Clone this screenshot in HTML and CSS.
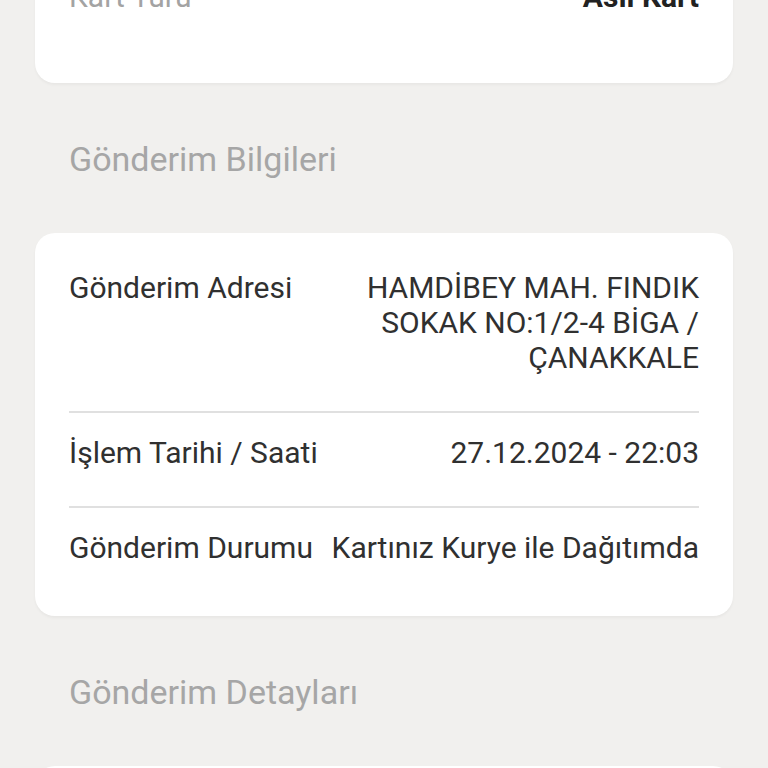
FILE: index.html
```html
<!DOCTYPE html>
<html lang="tr">
<head>
<meta charset="utf-8">
<title>Gönderim Bilgileri</title>
<link rel="stylesheet" href="styles.css">
</head>
<body>
<main class="page">
  <section class="card card-top">
    <div class="row row-top">
      <span class="label label-muted">Kart Türü</span>
      <span class="value value-strong">Asıl Kart</span>
    </div>
  </section>

  <h2 class="section-title">Gönderim Bilgileri</h2>

  <section class="card">
    <div class="row">
      <span class="label">Gönderim Adresi</span>
      <span class="value">HAMDİBEY MAH. FINDIK SOKAK NO:1/2-4 BİGA / ÇANAKKALE</span>
    </div>
    <div class="row">
      <span class="label">İşlem Tarihi / Saati</span>
      <span class="value">27.12.2024 - 22:03</span>
    </div>
    <div class="row">
      <span class="label">Gönderim Durumu</span>
      <span class="value">Kartınız Kurye ile Dağıtımda</span>
    </div>
  </section>

  <h2 class="section-title">Gönderim Detayları</h2>

  <section class="card card-bottom"></section>
</main>
</body>
</html>
```

FILE: styles.css
```css
html, body {
  margin: 0;
  padding: 0;
  background: #f1f0ee;
}

body {
  font-family: Roboto, "Noto Sans", sans-serif;
  color: #303030;
  overflow: hidden;
  height: 768px;
}

.page {
  padding: 0 35px;
  margin-top: -21px;
}

.card {
  background: #ffffff;
  border-radius: 20px;
  padding: 15px 34px;
  box-shadow: 0 2px 3px rgba(0, 0, 0, 0.04);
}

.card-top {
  border-radius: 0 0 20px 20px;
  padding: 0 34px 69px;
}

.card-bottom {
  height: 200px;
  border-radius: 20px 20px 0 0;
}

.row {
  display: flex;
  justify-content: space-between;
  align-items: flex-start;
  gap: 14px;
  padding: 22px 0 36px;
  border-bottom: 2px solid #e0e0e0;
  font-size: 30px;
  line-height: 35px;
}

.row:last-child {
  border-bottom: none;
}

.row-top {
  padding: 0;
  border-bottom: none;
}

.label {
  flex-shrink: 0;
}

.label-muted {
  color: #a3a3a3;
}

.value {
  flex: 1;
  min-width: 0;
  text-align: right;
}

.value-strong {
  font-weight: 700;
  color: #222222;
}

.section-title {
  margin: 0;
  padding: 56px 0 54px 34px;
  font-size: 34px;
  line-height: 40px;
  font-weight: 400;
  color: #a6a6a6;
}
```
